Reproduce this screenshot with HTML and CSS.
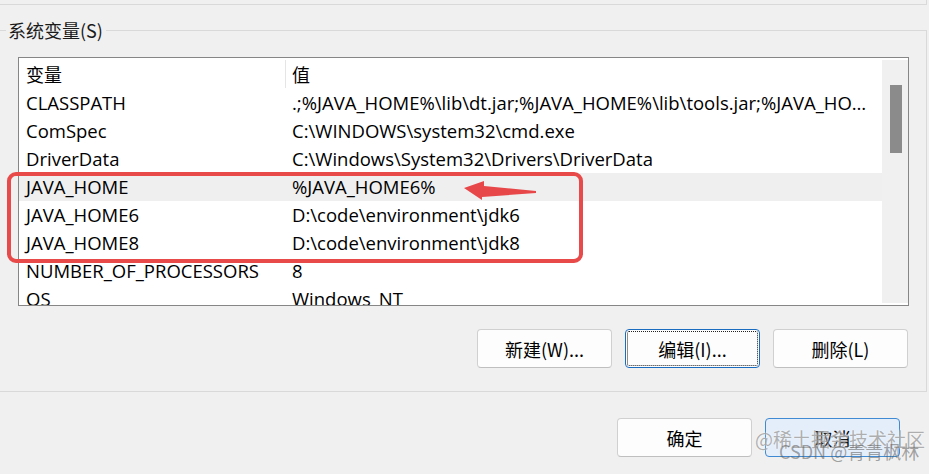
FILE: index.html
```html
<!DOCTYPE html>
<html lang="zh-CN">
  <head>
    <meta charset="UTF-8" />
    <title>环境变量</title>
    <link rel="stylesheet" href="styles.css">
  </head>
  <body>
    <div class="window">
      <div class="prev-group"></div>

      <section class="group">
        <div class="group-title">
          <span class="edge edge-left"></span>
          <span class="group-label">系统变量(S)</span>
          <span class="edge edge-right"></span>
        </div>

        <div class="group-body">
          <div class="listview">
            <div class="list-main">
              <div class="list-head">
                <div class="cell col-name">变量</div>
                <div class="cell col-value">值</div>
              </div>
              <div class="list-row">
                <div class="cell col-name">CLASSPATH</div>
                <div class="cell col-value">.;%JAVA_HOME%\lib\dt.jar;%JAVA_HOME%\lib\tools.jar;%JAVA_HOME%\bin</div>
              </div>
              <div class="list-row">
                <div class="cell col-name">ComSpec</div>
                <div class="cell col-value">C:\WINDOWS\system32\cmd.exe</div>
              </div>
              <div class="list-row">
                <div class="cell col-name">DriverData</div>
                <div class="cell col-value">C:\Windows\System32\Drivers\DriverData</div>
              </div>
              <div class="list-row hot">
                <div class="cell col-name">JAVA_HOME</div>
                <div class="cell col-value">%JAVA_HOME6%</div>
              </div>
              <div class="list-row">
                <div class="cell col-name">JAVA_HOME6</div>
                <div class="cell col-value">D:\code\environment\jdk6</div>
              </div>
              <div class="list-row">
                <div class="cell col-name">JAVA_HOME8</div>
                <div class="cell col-value">D:\code\environment\jdk8</div>
              </div>
              <div class="list-row">
                <div class="cell col-name">NUMBER_OF_PROCESSORS</div>
                <div class="cell col-value">8</div>
              </div>
              <div class="list-row">
                <div class="cell col-name">OS</div>
                <div class="cell col-value">Windows_NT</div>
              </div>
            </div>
            <div class="scrollbar">
              <div class="thumb"></div>
            </div>
          </div>

          <div class="button-row">
            <button class="btn">新建(W)...</button>
            <button class="btn btn-focus">编辑(I)...</button>
            <button class="btn">删除(L)</button>
          </div>
        </div>
      </section>

      <div class="dialog-buttons">
        <button class="btn">确定</button>
        <button class="btn btn-default">取消</button>
      </div>

      <!-- screenshot annotations -->
      <div class="mark-box"></div>
      <svg class="mark-arrow" width="80" height="30" viewBox="0 0 80 30">
        <polygon points="4,12 24,5 24,10 76,15 76,17 22,21 22,24" fill="#e8474a" />
      </svg>

      <div class="watermark wm-juejin">@稀土掘金技术社区</div>
      <div class="watermark wm-csdn">CSDN @青青枫林</div>
    </div>
  </body>
</html>
```

FILE: styles.css
```css
body {
  margin: 0;
  background: #f0f0f0;
}

.window {
  position: relative;
  width: 929px;
  height: 474px;
  overflow: hidden;
  background: #f0f0f0;
  font-family: "Open Sans", "Noto Sans CJK SC", sans-serif;
  color: #000;
}

.prev-group {
  box-sizing: border-box;
  width: 937px;
  height: 5px;
  margin-left: -10px;
  border-right: 1px solid #d9d9d9;
  border-bottom: 1px solid #d9d9d9;
}

.group {
  box-sizing: border-box;
  width: 937px;
  margin-top: 14px;
  margin-left: -10px;
}

.group-title {
  display: flex;
  height: 22px;
}

.edge {
  align-self: flex-end;
  height: 11px;
  border-top: 1px solid #d9d9d9;
  box-sizing: border-box;
}

.edge-left {
  width: 16px;
  border-left: 1px solid #d9d9d9;
}

.edge-right {
  flex: 1;
  border-right: 1px solid #d9d9d9;
}

.group-label {
  padding: 0 3px 0 2px;
  font-family: "Noto Sans CJK SC", sans-serif;
  font-size: 18px;
  line-height: 22px;
  color: #1a1a1a;
}

.group-body {
  padding: 16px 17px 23px 27px;
  border: 1px solid #d9d9d9;
  border-top: none;
}

.listview {
  display: flex;
  box-sizing: border-box;
  height: 249px;
  border: 1px solid #868686;
  background: #fff;
}

.list-main {
  flex: 1;
  min-width: 0;
  overflow: hidden;
}

.list-head {
  display: flex;
  height: 28px;
  margin: 2px 0 1px;
}

.list-row {
  display: flex;
  height: 28px;
}

.list-row.hot {
  background: #efefef;
}

.cell {
  font-size: 18.5px;
  line-height: 28px;
  white-space: nowrap;
}

.col-name {
  box-sizing: border-box;
  flex: none;
  width: 267px;
  padding-left: 7px;
}

.list-head .col-name {
  border-right: 1px solid #e5e5e5;
}

.list-head .cell {
  font-family: "Noto Sans CJK SC", sans-serif;
  font-size: 18px;
}

.col-value {
  flex: 1;
  min-width: 0;
  padding: 0 8px 0 6px;
  overflow: hidden;
  text-overflow: ellipsis;
}

.scrollbar {
  flex: none;
  width: 26px;
  margin: 2px 0;
  background: #f0f0f0;
}

.thumb {
  width: 12px;
  height: 68px;
  margin: 25px 0 0 8px;
  background: #8b8b8b;
}

.button-row,
.dialog-buttons {
  display: flex;
  justify-content: flex-end;
  gap: 13px;
}

.button-row {
  margin-top: 23px;
  padding-right: 1px;
}

.dialog-buttons {
  margin-top: 26px;
  padding-right: 29px;
}

.btn {
  box-sizing: border-box;
  width: 135px;
  height: 39px;
  padding: 0;
  border: 1px solid #d0d0d0;
  border-bottom-color: #bfbfbf;
  border-radius: 4px;
  background: #fdfdfd;
  font-family: "Noto Sans CJK SC", "Open Sans", sans-serif;
  font-size: 18px;
  color: #000;
}

.btn-focus {
  border-color: #1a6cc0;
  outline: 1px dotted #222;
  outline-offset: -3px;
}

.btn-default {
  border-color: #3f8ad2;
  background: #e4eefa;
}

.mark-box {
  position: absolute;
  left: 7px;
  top: 172px;
  width: 576px;
  height: 91px;
  box-sizing: border-box;
  border: 4px solid #e84a4a;
  border-radius: 9px;
}

.mark-arrow {
  position: absolute;
  left: 460px;
  top: 176px;
}

.watermark {
  position: absolute;
  font-family: "Noto Sans CJK SC", sans-serif;
  white-space: nowrap;
}

.wm-juejin {
  left: 755px;
  top: 425px;
  font-size: 19px;
  line-height: 28px;
  color: rgba(150, 150, 150, 0.75);
  text-shadow: 0 0 2px rgba(255, 255, 255, 0.9);
}

.wm-csdn {
  left: 779px;
  top: 437px;
  font-size: 18px;
  line-height: 28px;
  color: rgba(90, 90, 90, 0.55);
}
```
